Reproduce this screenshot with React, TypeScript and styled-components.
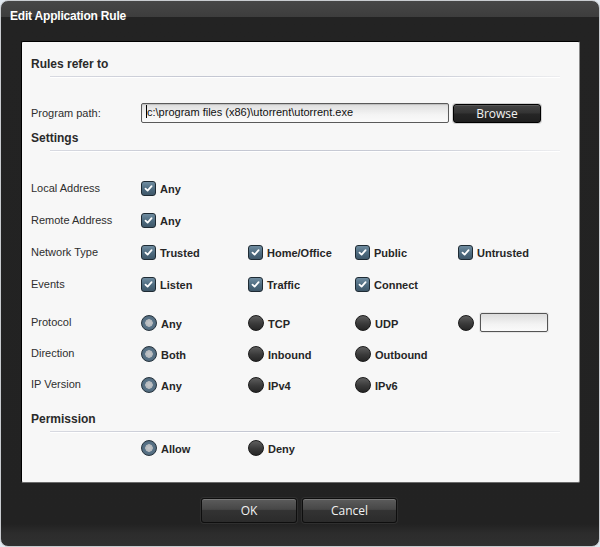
import React from "react"
import styled, { createGlobalStyle } from "styled-components"

const GlobalStyle = createGlobalStyle`
  html, body {
    margin: 0;
    padding: 0;
    background: #e2e9f0;
  }
  body {
    font-family: "Liberation Sans", Arial, sans-serif;
  }
`

const Window = styled.div`
  box-sizing: border-box;
  width: 600px;
  height: 547px;
  border: 1px solid #c9ccd0;
  border-radius: 8px;
  overflow: hidden;
  display: flex;
  flex-direction: column;
  background: linear-gradient(
    to bottom,
    #474747 0px,
    #3d3d3d 16px,
    #232323 16px,
    #222222 523px,
    #2c2c2c 532px,
    #303030 100%
  );
`

const TitleBar = styled.div`
  height: 40px;
  padding: 8px 0 0 9px;
  box-sizing: border-box;
  color: #ffffff;
  font-size: 12px;
  font-weight: bold;
  line-height: 14px;
  letter-spacing: -0.2px;
`

const Panel = styled.div`
  box-sizing: border-box;
  margin-left: 20px;
  width: 559px;
  height: 442px;
  background: #f7f7f7;
  border-top: 1px solid #000;
  border-left: 1px solid #000;
  border-right: 1px solid #8a8a8a;
  border-bottom: 1px solid #6a6a6a;
  border-radius: 2px;
  padding: 15px 0 0 9px;
  color: #222;
`

const Heading = styled.div<{ $gap?: number }>`
  margin-top: ${(p) => p.$gap ?? 0}px;
  font-size: 12px;
  font-weight: bold;
  line-height: 14px;
  color: #2a2a2a;
`

const Rule = styled.div`
  margin: 5px 19px 0 19px;
  height: 1px;
  background: linear-gradient(
    to right,
    rgba(195, 198, 210, 0.6),
    #c4c7d2 30%,
    #c8cbd5 70%,
    rgba(220, 222, 228, 0.4)
  );
  box-shadow: 0 1px 0 #ffffff;
`

const PathRow = styled.div`
  margin-top: 26px;
  display: grid;
  grid-template-columns: 110px 308px 92px;
  align-items: center;
  height: 20px;
`

const RowLabel = styled.div`
  font-size: 11px;
  line-height: 13px;
  color: #2e2e2e;
`

const PathInput = styled.div`
  box-sizing: border-box;
  height: 20px;
  border: 1px solid #5a5a5a;
  border-radius: 2px;
  background: linear-gradient(to bottom, #dedede, #f4f4f4 60%, #fafafa);
  box-shadow: inset 0 1px 1px rgba(0, 0, 0, 0.15);
  font-size: 11px;
  line-height: 17px;
  padding-left: 4px;
  color: #111;
  white-space: nowrap;
  overflow: hidden;
`

const Caret = styled.span`
  display: inline-block;
  width: 1px;
  height: 13px;
  background: #000;
  vertical-align: -2px;
`

const DarkButton = styled.button<{ $w: number; $h: number }>`
  box-sizing: border-box;
  width: ${(p) => p.$w}px;
  height: ${(p) => p.$h}px;
  border: 1px solid #0e0e0e;
  border-radius: 3px;
  background: linear-gradient(
    to bottom,
    #5c5c5c 0%,
    #474747 45%,
    #333333 50%,
    #2b2b2b 100%
  );
  box-shadow: inset 0 1px 0 rgba(255, 255, 255, 0.18), 0 0 0 1px rgba(255, 255, 255, 0.06);
  color: #f2f2f2;
  font-family: "Open Sans", "Noto Sans", sans-serif;
  font-size: 12px;
  padding: 0;
  cursor: pointer;
`

const BrowseButton = styled(DarkButton)`
  margin-left: 4px;
  background: linear-gradient(to bottom, #444 0%, #333 48%, #262626 52%, #1f1f1f 100%);
  border-color: #000;
  box-shadow: inset 0 1px 0 rgba(255, 255, 255, 0.12), 0 0 0 1px #d0d0d0;
`

const Options = styled.div<{ $gap: number }>`
  margin-top: ${(p) => p.$gap}px;
  display: flex;
  flex-direction: column;
`

const OptionRow = styled.div<{ $h: number }>`
  display: grid;
  grid-template-columns: 110px 107px 107px 103px auto;
  align-items: center;
  height: ${(p) => p.$h}px;
`

const Option = styled.label`
  display: flex;
  align-items: center;
  gap: 4px;
  font-size: 11px;
  font-weight: bold;
  color: #262626;
  white-space: nowrap;
`

const OptionText = styled.span`
  padding-top: 2px;
`

const CheckBox = styled.span`
  box-sizing: border-box;
  width: 15px;
  height: 15px;
  border: 1px solid #1e2a33;
  border-radius: 3px;
  background: linear-gradient(to bottom, #6f8ca0, #4d6a7e 55%, #3f586a);
  display: flex;
  align-items: center;
  justify-content: center;
`

const Radio = styled.span<{ $on?: boolean }>`
  box-sizing: border-box;
  width: 16px;
  height: 16px;
  border-radius: 50%;
  border: 1px solid ${(p) => (p.$on ? "#25323c" : "#1a1a1a")};
  background: ${(p) =>
    p.$on
      ? "radial-gradient(circle at 50% 50%, #c4c7ca 0, #b4b8bc 3.5px, #5a7488 4px, #4a6376 100%)"
      : "linear-gradient(to bottom, #5e5e5e, #3a3a3a 55%, #262626)"};
  flex-shrink: 0;
`

const SmallInput = styled.div`
  box-sizing: border-box;
  width: 68px;
  height: 19px;
  border: 1px solid #555;
  border-radius: 2px;
  background: linear-gradient(to bottom, #dcdcdc, #f3f3f3 60%, #fafafa);
  box-shadow: 0 0 0 1px #e6e6e6;
`

const Custom = styled.div`
  display: flex;
  align-items: center;
  gap: 6px;
`

const PermRow = styled.div`
  margin-top: 6px;
  height: 20px;
  display: grid;
  grid-template-columns: 110px 107px 107px;
  align-items: center;
`

const Footer = styled.div`
  display: flex;
  justify-content: center;
  gap: 5px;
  margin-top: 15px;
  padding-right: 2px;
`

const Check = () => (
  <CheckBox>
    <svg width="9" height="9" viewBox="0 0 9 9">
      <path d="M1.5 4.6 L3.6 6.6 L7.6 2.2" fill="none" stroke="#fff" strokeWidth="1.8" strokeLinecap="round" strokeLinejoin="round" />
    </svg>
  </CheckBox>
)

type Opt = { text: string; on?: boolean }

const CheckRow = ({ label, items }: { label: string; items: string[] }) => (
  <OptionRow $h={32}>
    <RowLabel>{label}</RowLabel>
    {items.map((t) => (
      <Option key={t}>
        <Check />
        <OptionText>{t}</OptionText>
      </Option>
    ))}
  </OptionRow>
)

const RadioRow = ({ label, items, extra }: { label: string; items: Opt[]; extra?: boolean }) => (
  <OptionRow $h={31}>
    <RowLabel>{label}</RowLabel>
    {items.map((o) => (
      <Option key={o.text}>
        <Radio $on={o.on} />
        <OptionText>{o.text}</OptionText>
      </Option>
    ))}
    {extra && (
      <Custom>
        <Radio />
        <SmallInput />
      </Custom>
    )}
  </OptionRow>
)

export default function App() {
  return (
    <>
      <GlobalStyle />
      <Window>
        <TitleBar>Edit Application Rule</TitleBar>
        <Panel>
          <Heading>Rules refer to</Heading>
          <Rule />
          <PathRow>
            <RowLabel>Program path:</RowLabel>
            <PathInput>
              <Caret />
              c:\program files (x86)\utorrent\utorrent.exe
            </PathInput>
            <BrowseButton $w={88} $h={19}>Browse</BrowseButton>
          </PathRow>

          <Heading $gap={8}>Settings</Heading>
          <Rule />
          <Options $gap={21}>
            <CheckRow label="Local Address" items={["Any"]} />
            <CheckRow label="Remote Address" items={["Any"]} />
            <CheckRow label="Network Type" items={["Trusted", "Home/Office", "Public", "Untrusted"]} />
            <CheckRow label="Events" items={["Listen", "Traffic", "Connect"]} />
          </Options>
          <Options $gap={7}>
            <RadioRow label="Protocol" items={[{ text: "Any", on: true }, { text: "TCP" }, { text: "UDP" }]} extra />
            <RadioRow label="Direction" items={[{ text: "Both", on: true }, { text: "Inbound" }, { text: "Outbound" }]} />
            <RadioRow label="IP Version" items={[{ text: "Any", on: true }, { text: "IPv4" }, { text: "IPv6" }]} />
          </Options>

          <Heading $gap={12}>Permission</Heading>
          <Rule />
          <PermRow>
            <span />
            <Option>
              <Radio $on />
              <OptionText>Allow</OptionText>
            </Option>
            <Option>
              <Radio />
              <OptionText>Deny</OptionText>
            </Option>
          </PermRow>
        </Panel>
        <Footer>
          <DarkButton $w={96} $h={25}>OK</DarkButton>
          <DarkButton $w={95} $h={25}>Cancel</DarkButton>
        </Footer>
      </Window>
    </>
  )
}
